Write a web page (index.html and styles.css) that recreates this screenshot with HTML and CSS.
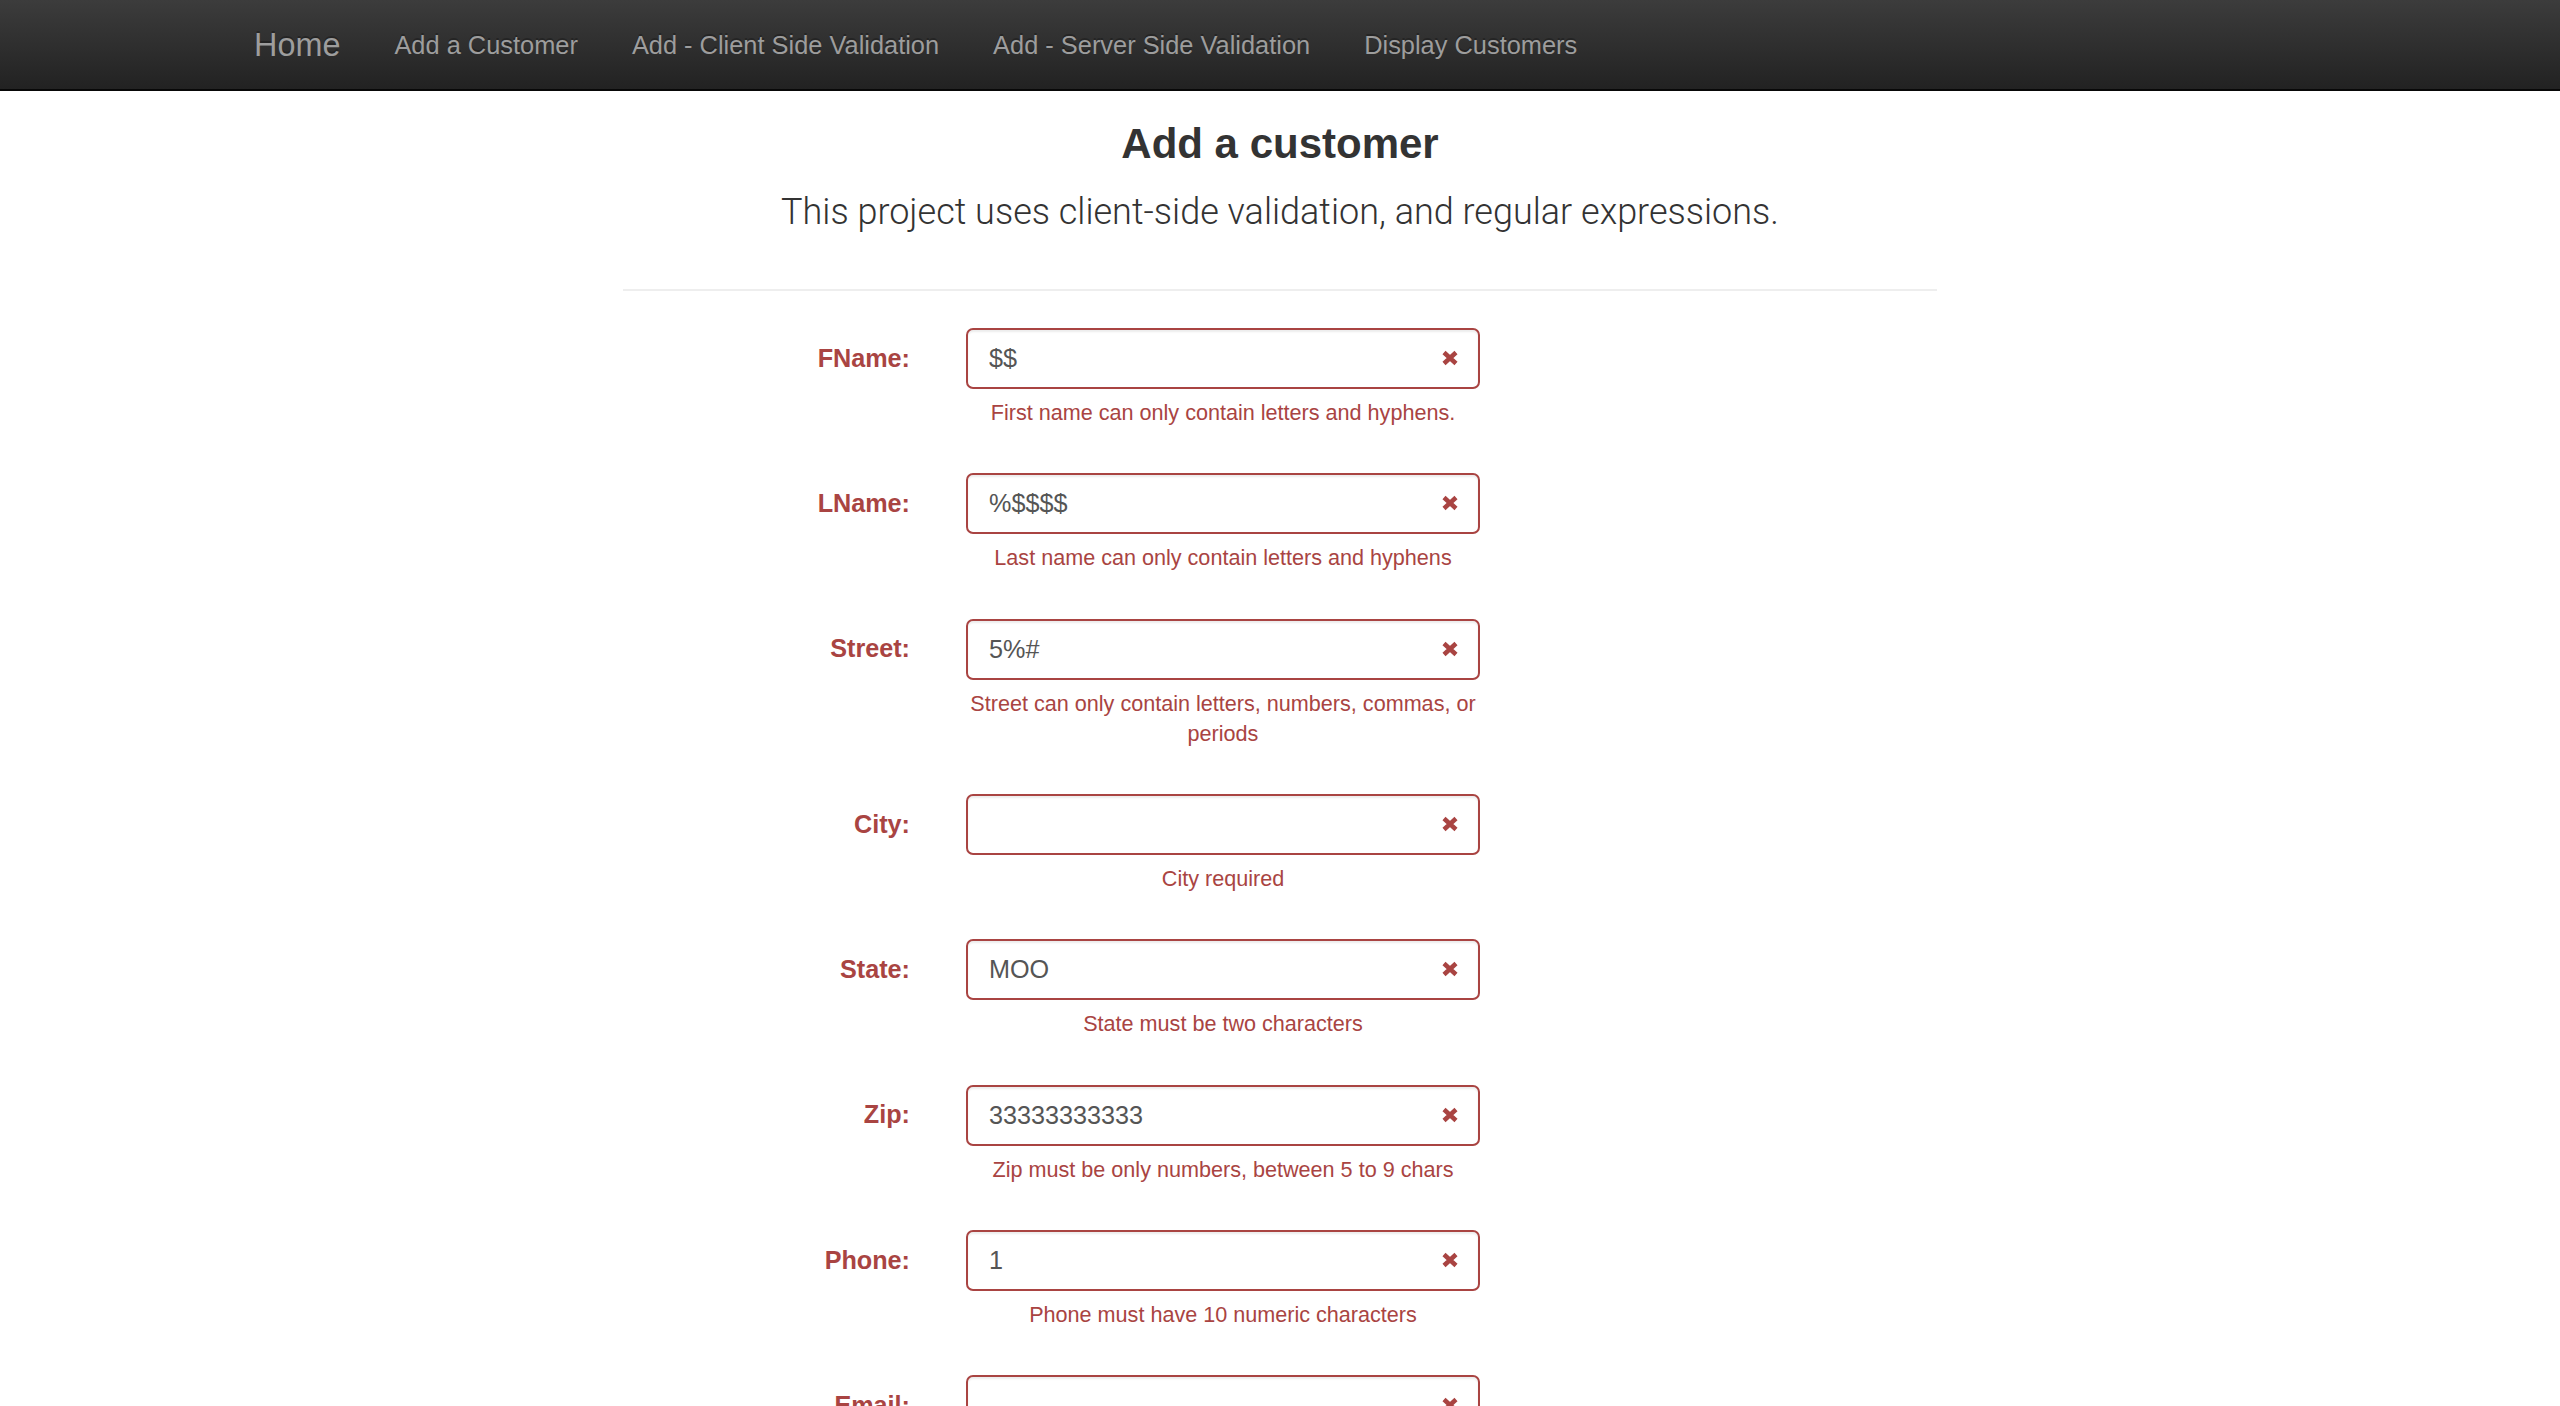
FILE: index.html
```html
<!DOCTYPE html>
<html lang="en">
<head>
<meta charset="utf-8">
<title>Add a customer</title>
<link rel="stylesheet" href="styles.css">
</head>
<body>
<nav class="navbar">
  <div class="nav-inner">
    <a class="brand" href="#">Home</a>
    <ul class="nav-links">
      <li><a href="#">Add a Customer</a></li>
      <li><a href="#">Add - Client Side Validation</a></li>
      <li><a href="#">Add - Server Side Validation</a></li>
      <li><a href="#">Display Customers</a></li>
    </ul>
  </div>
</nav>
<main class="content">
  <h3 class="title">Add a customer</h3>
  <p class="lead">This project uses client-side validation, and regular expressions.</p>
  <hr class="divider">
  <form class="form">
    <div class="form-row">
      <label class="field-label">FName:</label>
      <div class="field">
        <div class="input-wrap"><input class="field-input" type="text" value="$$"><svg class="feedback" viewBox="0 0 18 16"><path d="M3 2.5 L15 13.5 M15 2.5 L3 13.5"/></svg></div>
        <p class="help">First name can only contain letters and hyphens.</p>
      </div>
    </div>
    <div class="form-row">
      <label class="field-label">LName:</label>
      <div class="field">
        <div class="input-wrap"><input class="field-input" type="text" value="%$$$$"><svg class="feedback" viewBox="0 0 18 16"><path d="M3 2.5 L15 13.5 M15 2.5 L3 13.5"/></svg></div>
        <p class="help">Last name can only contain letters and hyphens</p>
      </div>
    </div>
    <div class="form-row">
      <label class="field-label">Street:</label>
      <div class="field">
        <div class="input-wrap"><input class="field-input" type="text" value="5%#"><svg class="feedback" viewBox="0 0 18 16"><path d="M3 2.5 L15 13.5 M15 2.5 L3 13.5"/></svg></div>
        <p class="help">Street can only contain letters, numbers, commas, or periods</p>
      </div>
    </div>
    <div class="form-row">
      <label class="field-label">City:</label>
      <div class="field">
        <div class="input-wrap"><input class="field-input" type="text" value=""><svg class="feedback" viewBox="0 0 18 16"><path d="M3 2.5 L15 13.5 M15 2.5 L3 13.5"/></svg></div>
        <p class="help">City required</p>
      </div>
    </div>
    <div class="form-row">
      <label class="field-label">State:</label>
      <div class="field">
        <div class="input-wrap"><input class="field-input" type="text" value="MOO"><svg class="feedback" viewBox="0 0 18 16"><path d="M3 2.5 L15 13.5 M15 2.5 L3 13.5"/></svg></div>
        <p class="help">State must be two characters</p>
      </div>
    </div>
    <div class="form-row">
      <label class="field-label">Zip:</label>
      <div class="field">
        <div class="input-wrap"><input class="field-input" type="text" value="33333333333"><svg class="feedback" viewBox="0 0 18 16"><path d="M3 2.5 L15 13.5 M15 2.5 L3 13.5"/></svg></div>
        <p class="help">Zip must be only numbers, between 5 to 9 chars</p>
      </div>
    </div>
    <div class="form-row">
      <label class="field-label">Phone:</label>
      <div class="field">
        <div class="input-wrap"><input class="field-input" type="text" value="1"><svg class="feedback" viewBox="0 0 18 16"><path d="M3 2.5 L15 13.5 M15 2.5 L3 13.5"/></svg></div>
        <p class="help">Phone must have 10 numeric characters</p>
      </div>
    </div>
    <div class="form-row">
      <label class="field-label">Email:</label>
      <div class="field">
        <div class="input-wrap"><input class="field-input" type="text" value=""><svg class="feedback" viewBox="0 0 18 16"><path d="M3 2.5 L15 13.5 M15 2.5 L3 13.5"/></svg></div>
        <p class="help">Email required</p>
      </div>
    </div>
  </form>
</main>
</body>
</html>
```

FILE: styles.css
```css
* { box-sizing: border-box; }

html, body {
  margin: 0;
  padding: 0;
  background: #fff;
}

body {
  font-family: "Liberation Sans", Arial, Helvetica, sans-serif;
  font-size: 25.2px;
  color: #333;
}

/* ---------- navbar ---------- */
.navbar {
  height: 91px;
  background: linear-gradient(to bottom, #3c3c3c 0, #222 100%);
  border-bottom: 2px solid #080808;
}

.nav-inner {
  width: 2106px;
  margin: 0 auto;
  display: flex;
  align-items: flex-start;
}

.brand {
  display: block;
  padding: 27px 27px;
  font-size: 32.4px;
  line-height: 36px;
  color: #9d9d9d;
  text-decoration: none;
  text-shadow: 0 -2px 0 rgba(0, 0, 0, 0.25);
}

.nav-links {
  list-style: none;
  margin: 0;
  padding: 0;
  display: flex;
}

.nav-links a {
  display: block;
  padding: 27px 27px;
  font-size: 25.4px;
  line-height: 36px;
  color: #9d9d9d;
  text-decoration: none;
  text-shadow: 0 -2px 0 rgba(0, 0, 0, 0.25);
}

/* ---------- content ---------- */
.content {
  width: 1314px;
  margin: 0 auto;
}

.title {
  margin: 29px 0 0;
  font-size: 42px;
  line-height: 48px;
  font-weight: 700;
  text-align: center;
  color: #333;
}

.lead {
  margin: 22px 0 0;
  font-family: Roboto, "Liberation Sans", sans-serif;
  font-weight: 300;
  font-size: 36px;
  line-height: 44px;
  text-align: center;
  color: #333;
}

.divider {
  margin: 55px 0 0;
  height: 2px;
  border: 0;
  background: #eee;
}

/* ---------- form ---------- */
.form {
  margin-top: 37px;
}

.form-row {
  display: grid;
  grid-template-columns: 287px 514px;
  column-gap: 56px;
  margin-bottom: 27px;
}

.field-label {
  padding-top: 11.6px;
  line-height: 36px;
  font-size: 25.2px;
  font-weight: 700;
  color: #a94442;
  text-align: right;
}

.input-wrap {
  position: relative;
}

.field-input {
  display: block;
  width: 100%;
  height: 61px;
  padding: 0 61px 0 21px;
  font-family: "Liberation Sans", Arial, sans-serif;
  font-size: 25.2px;
  color: #555;
  background: #fff;
  border: 2px solid #a94442;
  border-radius: 7px;
  box-shadow: inset 0 2px 2px rgba(0, 0, 0, 0.075);
  outline: none;
}

.feedback {
  position: absolute;
  right: 21px;
  top: 22px;
  width: 18px;
  height: 16px;
  fill: none;
  stroke: #a94442;
  stroke-width: 4.5;
}

.help {
  margin: 9px 0 18px;
  font-size: 21.6px;
  line-height: 30.3px;
  color: #a94442;
  text-align: center;
}
```
